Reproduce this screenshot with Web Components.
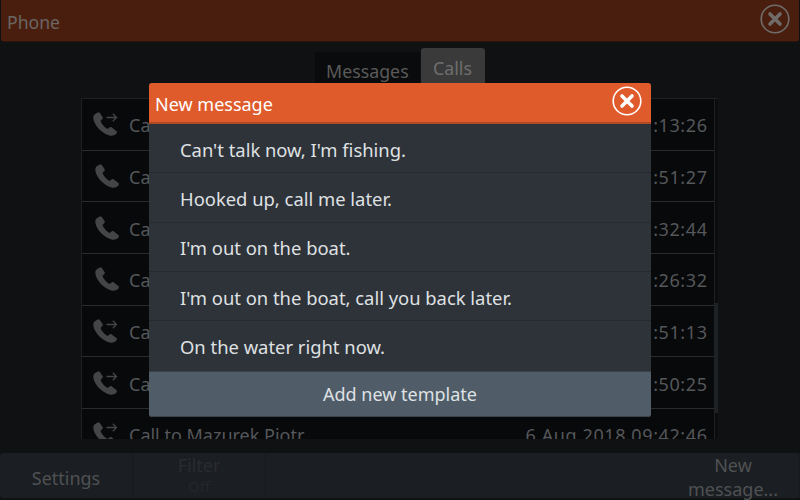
<!doctype html>
<html lang="en">
  <head>
    <meta charset="utf-8">
    <title>Phone</title>
    <style>
      html, body {
        margin: 0;
        padding: 0;
        height: 100%;
        background: #0f1113;
        font-family: "Noto Sans", "DejaVu Sans", sans-serif;
      }
    </style>
  </head>
  <body>
    <template id="close-button" data-component>
      <style>
        :host { display: block; width: 30px; height: 30px; color: #fff; }
        svg { display: block; }
      </style>
      <svg width="30" height="30" viewBox="0 0 30 30">
        <circle cx="15" cy="15" r="13.8" fill="none" stroke="currentColor" stroke-width="1.6"/>
        <path d="M10 10 L20 20 M20 10 L10 20" stroke="currentColor" stroke-width="3.6" stroke-linecap="round"/>
      </svg>
    </template>

    <template id="title-bar" data-component>
      <style>
        :host {
          display: flex;
          align-items: center;
          justify-content: space-between;
          box-sizing: border-box;
          height: 42px;
          margin: 0 1px;
          padding: 0 9px 0 6px;
          background: #4a1e0e;
          border-radius: 0 0 3px 3px;
          border-bottom: 1px solid #2c1208;
          color: #6a6764;
          font-size: 17.6px;
        }
        span { padding-top: 2px; }
        close-button { color: #6f6c6a; margin-bottom: 4px; }
      </style>
      <span><slot></slot></span>
      <close-button></close-button>
    </template>

    <template id="tab-strip" data-component>
      <style>
        :host {
          display: flex;
          justify-content: center;
          height: 36px;
          margin: 6px 0 14px;
          font-size: 17.8px;
        }
        div { box-sizing: border-box; }
        .off { width: 105px; height: 35px; margin-top: 4px; padding: 7px 0 0 11px; background: #0a0b0c; color: #5a5a5a; margin-right: 1px; }
        .on { width: 64px; padding: 8px 0 0 12px; background: #3a3a3a; color: #6e6e6e; border-radius: 3px 3px 0 0; }
      </style>
      <div class="off">Messages</div>
      <div class="on">Calls</div>
    </template>

    <template id="call-row" data-component>
      <style>
        :host {
          display: flex;
          align-items: center;
          box-sizing: border-box;
          height: 51.7px;
          padding: 0 7px 0 11px;
          flex: none;
          border-bottom: 1px solid #2a2b2c;
          color: #55575a;
          font-size: 18px;
          white-space: nowrap;
        }
        svg { flex: none; margin-right: 12px; }
        .name { flex: 1; padding-top: 2px; }
        .when { letter-spacing: .6px; margin-right: -.6px; padding-top: 2px; }
        .arrow { display: none; }
        :host([out]) .arrow { display: inline; }
        :host(:not([out])) .phone { transform: translate(2px, 0); }
      </style>
      <svg width="24" height="24" viewBox="0 0 24 24" overflow="visible">
        <path class="phone" fill="#434547" d="M4.5 .5 L1.5 2.5 C.5 3.5 0 5 .5 7.5 C2 14 9 21.5 16.5 23.5 C19 24 21.5 23.5 23.5 21.5 L24 19.5 L18.5 15.2 C18 15 17.5 15 17 15.3 L14.5 17 C11.5 15.5 8.5 12 7.5 9 L9.5 6.8 C10 6.3 10 5.8 9.7 5.2 L6.5 .5 Z"/>
        <path class="arrow" fill="none" stroke="#434547" stroke-width="1.3" d="M13.5 5.5 H23.5 M19.8 1.8 L23.5 5.5 L19.8 9.2"/>
      </svg>
      <span class="name"><slot name="name"></slot></span>
      <span class="when"><slot name="when"></slot></span>
    </template>

    <template id="call-list" data-component>
      <style>
        :host {
          display: block;
          box-sizing: border-box;
          position: relative;
          height: 341px;
          margin: 0 82px 0 81px;
          padding-right: 3px;
          border-top: 1px solid #1f2021;
          border-left: 1px solid #1f2021;
          background: #0b0c0d;
          overflow: hidden;
        }
        .rows {
          display: flex;
          flex-direction: column;
          height: 100%;
          overflow: hidden;
          background: #08090a;
          border-right: 1px solid #1f2021;
        }
        .thumb {
          position: absolute;
          top: 204px;
          right: 0;
          width: 3px;
          height: 110px;
          background: #1f2225;
        }
      </style>
      <div class="rows"><slot></slot></div>
      <div class="thumb"></div>
    </template>

    <template id="soft-key" data-component>
      <style>
        :host {
          display: flex;
          flex-direction: column;
          align-items: center;
          justify-content: center;
          box-sizing: border-box;
          height: 100%;
          width: 133px;
          padding-top: 5px;
          color: #4f5153;
          font-size: 18px;
          line-height: 24px;
          text-align: center;
        }
        :host([dim]) { color: #2a2c2f; padding: 0 0 2px; line-height: 22px; }
        :host([push]) { margin-left: auto; padding-top: 3px; }
        ::slotted(small) { font-size: 15px; line-height: 20px; color: #25272a; }
      </style>
      <slot></slot>
    </template>

    <template id="key-bar" data-component>
      <style>
        :host {
          display: flex;
          box-sizing: border-box;
          height: 45px;
          margin-top: 14px;
          background: #1b1e22;
          border-radius: 3px;
        }
        ::slotted(*) { border-right: 1px solid #17191c; }
      </style>
      <slot></slot>
    </template>

    <template id="template-row" data-component>
      <style>
        :host {
          display: flex;
          align-items: center;
          box-sizing: border-box;
          height: 49.3px;
          padding: 2px 31px 0;
          border-bottom: 1px solid #272a2f;
          color: #dfe1e3;
          font-size: 18.4px;
          white-space: nowrap;
        }
        :host(:last-of-type) { border-bottom: 0; }
      </style>
      <slot></slot>
    </template>

    <template id="message-dialog" data-component>
      <style>
        :host {
          position: absolute;
          left: 149px;
          top: 83px;
          width: 502px;
          height: 334px;
          display: flex;
          flex-direction: column;
          background: #2e3239;
          border-radius: 3px;
          overflow: hidden;
        }
        header {
          display: flex;
          align-items: center;
          justify-content: space-between;
          box-sizing: border-box;
          height: 41px;
          flex: none;
          padding: 0 9px 3px 6px;
          background: #df5b2c;
          border-bottom: 2px solid #b04a24;
          color: #fff;
          font-size: 18px;
        }
        header span { padding-top: 6px; }
        .list { flex: 1; }
        footer {
          display: flex;
          align-items: center;
          justify-content: center;
          height: 46px;
          flex: none;
          background: #505d69;
          border-top: 1px solid #3a424b;
          border-bottom: 1px solid #3c444c;
          box-sizing: border-box;
          color: #dfe2e4;
          font-size: 18px;
        }
      </style>
      <header><span><slot name="title"></slot></span><close-button></close-button></header>
      <div class="list"><slot></slot></div>
      <footer><slot name="action"></slot></footer>
    </template>

    <title-bar>Phone</title-bar>
    <tab-strip></tab-strip>
    <call-list>
      <call-row out><span slot="name">Ca</span><span slot="when">:13:26</span></call-row>
      <call-row><span slot="name">Ca</span><span slot="when">:51:27</span></call-row>
      <call-row><span slot="name">Ca</span><span slot="when">:32:44</span></call-row>
      <call-row><span slot="name">Ca</span><span slot="when">:26:32</span></call-row>
      <call-row out><span slot="name">Ca</span><span slot="when">:51:13</span></call-row>
      <call-row out><span slot="name">Ca</span><span slot="when">:50:25</span></call-row>
      <call-row out><span slot="name">Call to Mazurek Piotr</span><span slot="when">6 Aug 2018 09:42:46</span></call-row>
    </call-list>
    <key-bar>
      <soft-key>Settings</soft-key>
      <soft-key dim>Filter<small>Off</small></soft-key>
      <soft-key push>New message...</soft-key>
    </key-bar>
    <message-dialog>
      <span slot="title">New message</span>
      <template-row>Can't talk now, I'm fishing.</template-row>
      <template-row>Hooked up, call me later.</template-row>
      <template-row>I'm out on the boat.</template-row>
      <template-row>I'm out on the boat, call you back later.</template-row>
      <template-row>On the water right now.</template-row>
      <span slot="action">Add new template</span>
    </message-dialog>

    <script>
      document.querySelectorAll("template[data-component]").forEach((template) => {
        customElements.define(template.id, class extends HTMLElement {
          constructor() {
            super();
            this.attachShadow({ mode: "open" })
              .appendChild(template.content.cloneNode(true));
          }
        });
      });
    </script>
  </body>
</html>
